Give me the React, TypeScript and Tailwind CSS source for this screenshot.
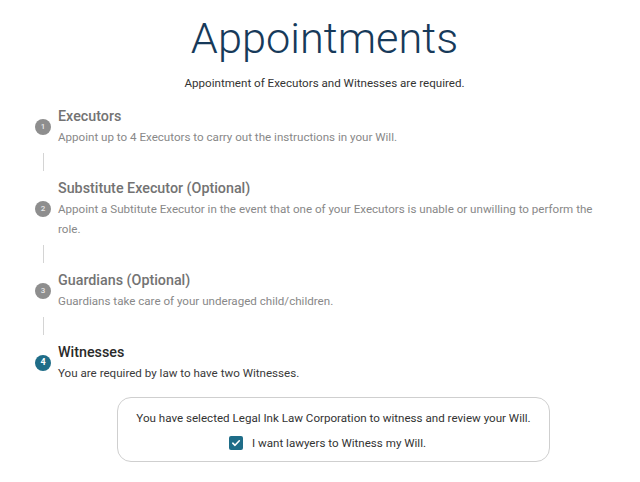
const steps = [
  {
    n: 1,
    title: 'Executors',
    desc: 'Appoint up to 4 Executors to carry out the instructions in your Will.',
    active: false,
  },
  {
    n: 2,
    title: 'Substitute Executor (Optional)',
    desc: 'Appoint a Subtitute Executor in the event that one of your Executors is unable or unwilling to perform the role.',
    active: false,
  },
  {
    n: 3,
    title: 'Guardians (Optional)',
    desc: 'Guardians take care of your underaged child/children.',
    active: false,
  },
  {
    n: 4,
    title: 'Witnesses',
    desc: 'You are required by law to have two Witnesses.',
    active: true,
  },
]

export default function App() {
  return (
    <main className="min-h-screen bg-white font-['Roboto','Liberation_Sans',sans-serif]">
      {/* Header */}
      <header className="pl-[9px] text-center">
        <h1 className="pt-[17px] text-[43.3px] leading-none font-light text-[#173a5a]">Appointments</h1>
        <p className="mt-[13px] text-[11.6px] leading-5 text-[#333]">
          Appointment of Executors and Witnesses are required.
        </p>
      </header>

      {/* Steps */}
      <section className="mt-[13px] pl-[35px] pr-[40px]">
        {steps.map((step, i) => (
          <div key={step.n}>
            <div className="flex items-center gap-[7px]">
              <div
                className={
                  step.active
                    ? 'w-4 h-4 shrink-0 rounded-full bg-[#1f6d88] text-white text-[9px] font-bold flex items-center justify-center'
                    : 'w-4 h-4 shrink-0 rounded-full bg-[#8e8e8e] text-[#e8e8e8] text-[8px] font-medium flex items-center justify-center'
                }
              >
                {step.n}
              </div>
              <div className="max-w-[545px]">
                <h3
                  className={
                    step.active
                      ? 'text-[14.3px] leading-[21px] font-medium text-[#2a2a2a]'
                      : 'text-[14.3px] leading-[21px] font-medium text-[#737373]'
                  }
                >
                  {step.title}
                </h3>
                <p
                  className={
                    step.active
                      ? 'text-[11.6px] leading-5 text-[#3a3a3a]'
                      : 'text-[11.6px] leading-5 text-[#888]'
                  }
                >
                  {step.desc}
                </p>
              </div>
            </div>
            {i < steps.length - 1 && (
              <div className="ml-[7.5px] mt-[6px] mb-[7px] h-[18px] w-px bg-[#d4d4d4]" />
            )}
          </div>
        ))}

        {/* Witness box */}
        <div className="mt-[14px] ml-[82px] w-[433px] h-[65px] pt-[2px] rounded-[14px] border border-[#cfcfcf] flex flex-col items-center justify-center gap-[5px]">
          <p className="text-[11.6px] leading-5 text-[#333]">
            You have selected Legal Ink Law Corporation to witness and review your Will.
          </p>
          <label className="pr-[12px] flex items-center gap-[9px] text-[11.6px] leading-5 text-[#333]">
            <span className="w-[14px] h-[14px] rounded-[2px] bg-[#1f6d88] flex items-center justify-center">
              <svg width="10" height="10" viewBox="0 0 10 10" fill="none">
                <path d="M1.8 5.2 L4 7.3 L8.3 2.8" stroke="white" strokeWidth="1.6" strokeLinecap="round" strokeLinejoin="round" />
              </svg>
            </span>
            I want lawyers to Witness my Will.
          </label>
        </div>
      </section>
    </main>
  )
}
